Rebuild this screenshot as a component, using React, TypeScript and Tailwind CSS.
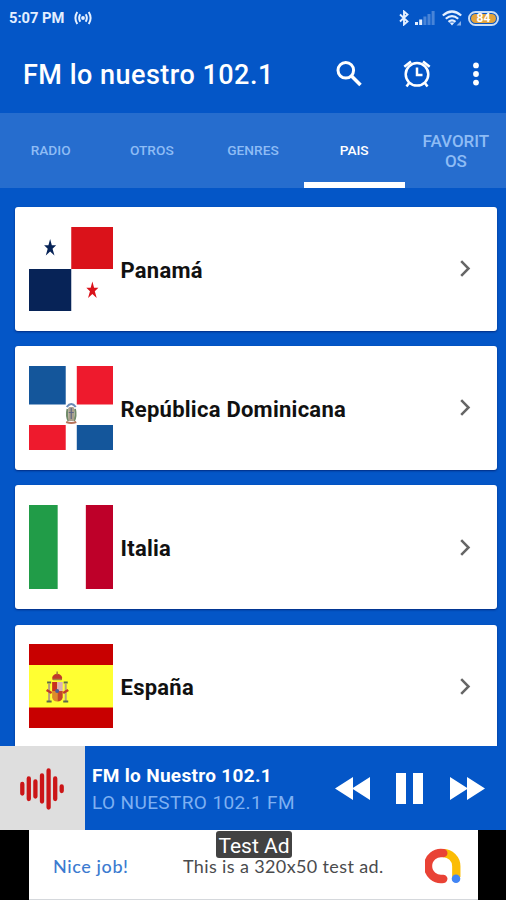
import type { ReactNode } from "react";

const PanamaFlag = () => (
  <svg viewBox="0 0 84 84" className="h-[84px] w-[84.5px] shrink-0" preserveAspectRatio="none">
    <rect width="84" height="84" fill="#fff" />
    <rect x="42" width="42" height="42" fill="#da121a" />
    <rect y="42" width="42" height="42" fill="#072357" />
    <path d="M21 12l1.700 6.300H27l-3.600 3.400 1.900 6.800-4.300-4-4.300 4 1.900-6.800-3.600-3.400h4.300z" fill="#072357" />
    <path d="M63 54.500l1.700 6.300H69l-3.600 3.400 1.900 6.800-4.300-4-4.300 4 1.900-6.800-3.600-3.400h4.300z" fill="#da121a" />
  </svg>
);

const DominicanFlag = () => (
  <svg viewBox="0 0 84 84" className="h-[84px] w-[84.5px] shrink-0" preserveAspectRatio="none">
    <rect width="84" height="84" fill="#fff" />
    <rect width="36.5" height="38.5" fill="#14569b" />
    <rect x="47.5" width="36.5" height="38.5" fill="#ee1a2d" />
    <rect y="59" width="36.5" height="25" fill="#ee1a2d" />
    <rect x="47.5" y="59" width="36.5" height="25" fill="#14569b" />
    {/* coat of arms */}
    <path d="M37.500 41q4.500-6 9 0" stroke="#6b8ab5" strokeWidth="2" fill="none" />
    <path d="M38.300 43q-1.500 7 1 12M45.700 43q1.500 7-1 12" stroke="#6f8a68" strokeWidth="2" fill="none" />
    <rect x="39" y="41" width="6" height="14" rx="1.500" fill="#a9a08d" />
    <path d="M42 42v11M39.500 46.500h5" stroke="#5f6685" strokeWidth="1.200" />
    <path d="M37 56q5 2 10 0" stroke="#b5735a" strokeWidth="2.200" fill="none" />
  </svg>
);

const ItalyFlag = () => (
  <svg viewBox="0 0 84 84" className="h-[84px] w-[84.5px] shrink-0" preserveAspectRatio="none">
    <rect width="84" height="84" fill="#fff" />
    <rect width="28.500" height="84" fill="#219c48" />
    <rect x="56.500" width="27.500" height="84" fill="#be0029" />
  </svg>
);

const SpainFlag = () => (
  <svg viewBox="0 0 84 84" className="h-[84px] w-[84.5px] shrink-0" preserveAspectRatio="none">
    <rect width="84" height="84" fill="#c80000" />
    <rect y="21" width="84" height="42.500" fill="#ffff32" />
    {/* pillars */}
    <path d="M20 40v17M36.500 40v17" stroke="#b9a07c" strokeWidth="2" />
    <path d="M17.500 46l5 3M39 46l-5 3" stroke="#c43a28" strokeWidth="2.500" />
    <path d="M18 38.500h4M34.500 38.500h4M17.500 57.500h5M34 57.500h5" stroke="#5e6a4a" strokeWidth="2" />
    {/* crown */}
    <path d="M23.500 36q-2-5 4.500-6.500 6.500 1.500 4.500 6.500z" fill="#c0392b" />
    <path d="M28 27.500v3M24 35.500h8.500" stroke="#a8853a" strokeWidth="1.500" />
    {/* shield */}
    <path d="M23 38h5v9h-5z" fill="#c8321f" />
    <path d="M28 38h5.500v9H28z" fill="#dcb0b4" />
    <path d="M23 47h5.200v10.500q-4.500 0-5.200-4z" fill="#dd8a2c" />
    <path d="M28.200 47h5.300v6.500q-.8 4-5.300 4z" fill="#c4452a" />
    <circle cx="28" cy="47" r="2" fill="#4c5a96" />
  </svg>
);

const countries: { name: string; flag: ReactNode }[] = [
  { name: "Panamá", flag: <PanamaFlag /> },
  { name: "República Dominicana", flag: <DominicanFlag /> },
  { name: "Italia", flag: <ItalyFlag /> },
  { name: "España", flag: <SpainFlag /> },
];

const tabs = ["RADIO", "OTROS", "GENRES", "PAIS"];

const StatusBar = () => (
  <div className="flex h-9 items-center pl-[9px] pr-[7px] text-[#e4efff]">
    <span className="w-[57px] whitespace-nowrap text-[14.700px] font-bold leading-none">5:07 PM</span>
    <svg viewBox="0 0 18 14" className="ml-[8px] h-[14px] w-[18px]" fill="none" stroke="currentColor" strokeWidth="2">
      <circle cx="9" cy="7" r="1.900" fill="currentColor" stroke="none" />
      <path d="M6.300 3.300q-2.300 3.700 0 7.400M11.700 3.300q2.300 3.700 0 7.400M3.300 1q-3.800 6 0 12M14.700 1q3.800 6 0 12" />
    </svg>
    <div className="ml-auto flex items-center">
      <svg viewBox="0 0 10 16" className="h-4 w-[10px]" fill="none" stroke="currentColor" strokeWidth="1.900">
        <path d="M1 4.500l7.500 7L5 14.500v-13l3.500 3-7.500 7" />
      </svg>
      <svg viewBox="0 0 20 14" className="ml-[6px] h-[14px] w-5" fill="currentColor">
        <rect y="11" width="3" height="3" />
        <rect x="4.200" y="8.500" width="3" height="5.500" />
        <g opacity=".3">
          <rect x="8.400" y="5.500" width="3" height="8.500" />
          <rect x="12.500" y="3" width="3" height="11" />
          <rect x="16.600" width="3" height="14" />
        </g>
      </svg>
      <svg viewBox="0 0 20 16" className="ml-[7px] h-4 w-5" fill="none" stroke="currentColor" strokeWidth="2.200">
        <path d="M.8 5.500q9.200-8 18.400 0M3.800 8.800q6.200-5.500 12.400 0M6.500 11.800q3.500-3 7 0" />
        <path d="M7.500 12.500h5L10 15.500z" fill="currentColor" stroke="none" />
        <path d="M19 11v4.500h-4.500z" fill="currentColor" stroke="none" opacity=".6" />
      </svg>
      <div className="ml-[6px] flex h-[15px] w-[31px] items-center rounded-full border-2 border-[#c9dcf5] p-px">
        <div className="flex h-full w-full items-center justify-center rounded-full bg-[#e2a33c] text-[12px] font-bold leading-none text-white">
          84
        </div>
      </div>
    </div>
  </div>
);

const Toolbar = () => (
  <header className="flex h-[77px] items-center pb-[2px] pl-[23px] pr-[27px] text-white">
    <h1 className="whitespace-nowrap pt-[4px] text-[27px] font-medium leading-none tracking-[0.480px]">
      FM lo nuestro 102.1
    </h1>
    <div className="ml-auto flex items-center">
      <svg viewBox="0 0 26 26" className="h-[26px] w-[26px]" fill="none" stroke="currentColor" strokeWidth="3">
        <circle cx="9.800" cy="9.300" r="7.800" />
        <path d="M15.500 15l9 9" strokeWidth="3.600" />
      </svg>
      <svg viewBox="0 0 28 28" className="ml-[41px] h-7 w-7" fill="none" stroke="currentColor" strokeWidth="2.500">
        <circle cx="14" cy="14.300" r="11.300" />
        <path d="M14 7.500v7.500h5.500" />
        <path d="M1.300 6.800L8 1.500M26.700 6.800L20 1.500M6.500 22.500l-3 4M21.500 22.500l3 4" />
      </svg>
      <svg viewBox="0 0 6 24" className="ml-[42px] h-6 w-[6px]" fill="currentColor">
        <circle cx="3" cy="3.400" r="2.900" />
        <circle cx="3" cy="12" r="2.900" />
        <circle cx="3" cy="20.600" r="2.900" />
      </svg>
    </div>
  </header>
);

const TabBar = () => (
  <nav className="grid h-[75px] grid-cols-5 bg-[#266dce] font-medium text-[#8ebcf5]">
    {tabs.map((tab) => (
      <div
        key={tab}
        className={
          tab === "PAIS"
            ? "flex items-center justify-center border-b-[6px] border-white pt-[6px] text-[13.700px] text-white"
            : "flex items-center justify-center text-[13.700px]"
        }
      >
        {tab}
      </div>
    ))}
    <div className="flex items-center justify-center pl-px pt-[2px] text-center text-[17px] leading-[19.500px]">
      <span className="w-[70px] break-all">FAVORITOS</span>
    </div>
  </nav>
);

const Player = () => (
  <div className="flex h-[84px] shrink-0 bg-[#0456c7]">
    <div className="flex w-[85px] items-center justify-center bg-[#dedede] pr-[2px] pt-[2px]">
      <svg viewBox="0 0 44 44" className="h-11 w-11" stroke="#cb1517" strokeWidth="4.300" strokeLinecap="round">
        <path d="M2.300 17v9.500M8.800 11.500v20.500M15.400 14.500v15M22 8.500v26M28.600 3.500v37M35.200 11.500v20.500M41.700 19.500v4.500" />
      </svg>
    </div>
    <div className="flex flex-1 items-center pl-[7px] pr-[21px]">
      <div className="whitespace-nowrap pt-[2px]">
        <p className="text-[19px] font-bold leading-[27px] tracking-[0.320px] text-white">FM lo Nuestro 102.1</p>
        <p className="text-[19px] leading-[27px] tracking-[0.380px] text-[#7eb0f2]">LO NUESTRO 102.1 FM</p>
      </div>
      <div className="ml-auto flex items-center text-white">
        <svg viewBox="0 0 35 23" className="h-[23px] w-[35px]" fill="currentColor">
          <path d="M0 11.500L18 0v23zM17 11.500L35 0v23z" />
        </svg>
        <svg viewBox="0 0 27 31" className="ml-[26px] h-[31px] w-[27px]" fill="currentColor">
          <path d="M0 0h10v31H0zM17 0h10v31H17z" />
        </svg>
        <svg viewBox="0 0 35 23" className="ml-[27px] h-[23px] w-[35px]" fill="currentColor">
          <path d="M35 11.500L17 0v23zM18 11.500L0 0v23z" />
        </svg>
      </div>
    </div>
  </div>
);

const AdBanner = () => (
  <div className="relative h-[70px] shrink-0 bg-black pl-[29px] pr-7">
    <div className="flex h-full items-center border-b border-[#d5d8dc] bg-white pl-6 pr-[17px] pt-[2px] font-['Lato',sans-serif] text-[18px] leading-none">
      <span className="w-[130px] pt-px font-medium tracking-[0.600px] text-[#3c7bd0]">Nice job!</span>
      <span className="h-[14px] whitespace-nowrap leading-[14px] tracking-[0.370px] text-[#4a4b4d]">
        This is a 320x50 test ad.
      </span>
      <svg viewBox="0 0 36 36" className="ml-auto h-9 w-9" fill="none" strokeWidth="8.300">
        <path d="M18 5.200A13 13 0 0 1 31.300 18.200V29" stroke="#fbbc04" />
        <path d="M18.300 5.200A13 13 0 1 0 18.300 30.800" stroke="#e94235" strokeLinecap="round" />
        <circle cx="31" cy="30.700" r="4.300" fill="#4285f4" />
      </svg>
    </div>
    <div className="absolute left-[216px] top-px flex h-[27px] w-[76px] items-center justify-center rounded-[3px] bg-[#424242] pt-[2px] text-[21px] leading-[18px] text-white">
      Test Ad
    </div>
  </div>
);

export default function App() {
  return (
    <div className="flex h-[900px] w-[506px] flex-col overflow-hidden bg-[#0456c7] font-['Roboto',sans-serif]">
      <StatusBar />
      <Toolbar />
      <TabBar />
      <ul className="flex min-h-0 flex-1 flex-col gap-[15.700px] overflow-hidden pl-[14.500px] pr-[9px] pt-[19px]">
        {countries.map((country) => (
          <li
            key={country.name}
            className="flex h-[123.500px] shrink-0 items-center rounded-[3px] bg-white pl-[14px] pr-[26px] shadow-[0_1px_2px_rgba(0,0,60,0.5)]"
          >
            {country.flag}
            <span className="ml-[7.500px] pt-[3px] text-[22px] font-bold tracking-[0.250px] text-[#111]">{country.name}</span>
            <svg viewBox="0 0 11 17" className="ml-auto h-[17px] w-[11px]" fill="none" stroke="#666" strokeWidth="2.500">
              <path d="M1.200 1.200l7.300 7.300-7.300 7.300" />
            </svg>
          </li>
        ))}
      </ul>
      <Player />
      <AdBanner />
    </div>
  );
}
